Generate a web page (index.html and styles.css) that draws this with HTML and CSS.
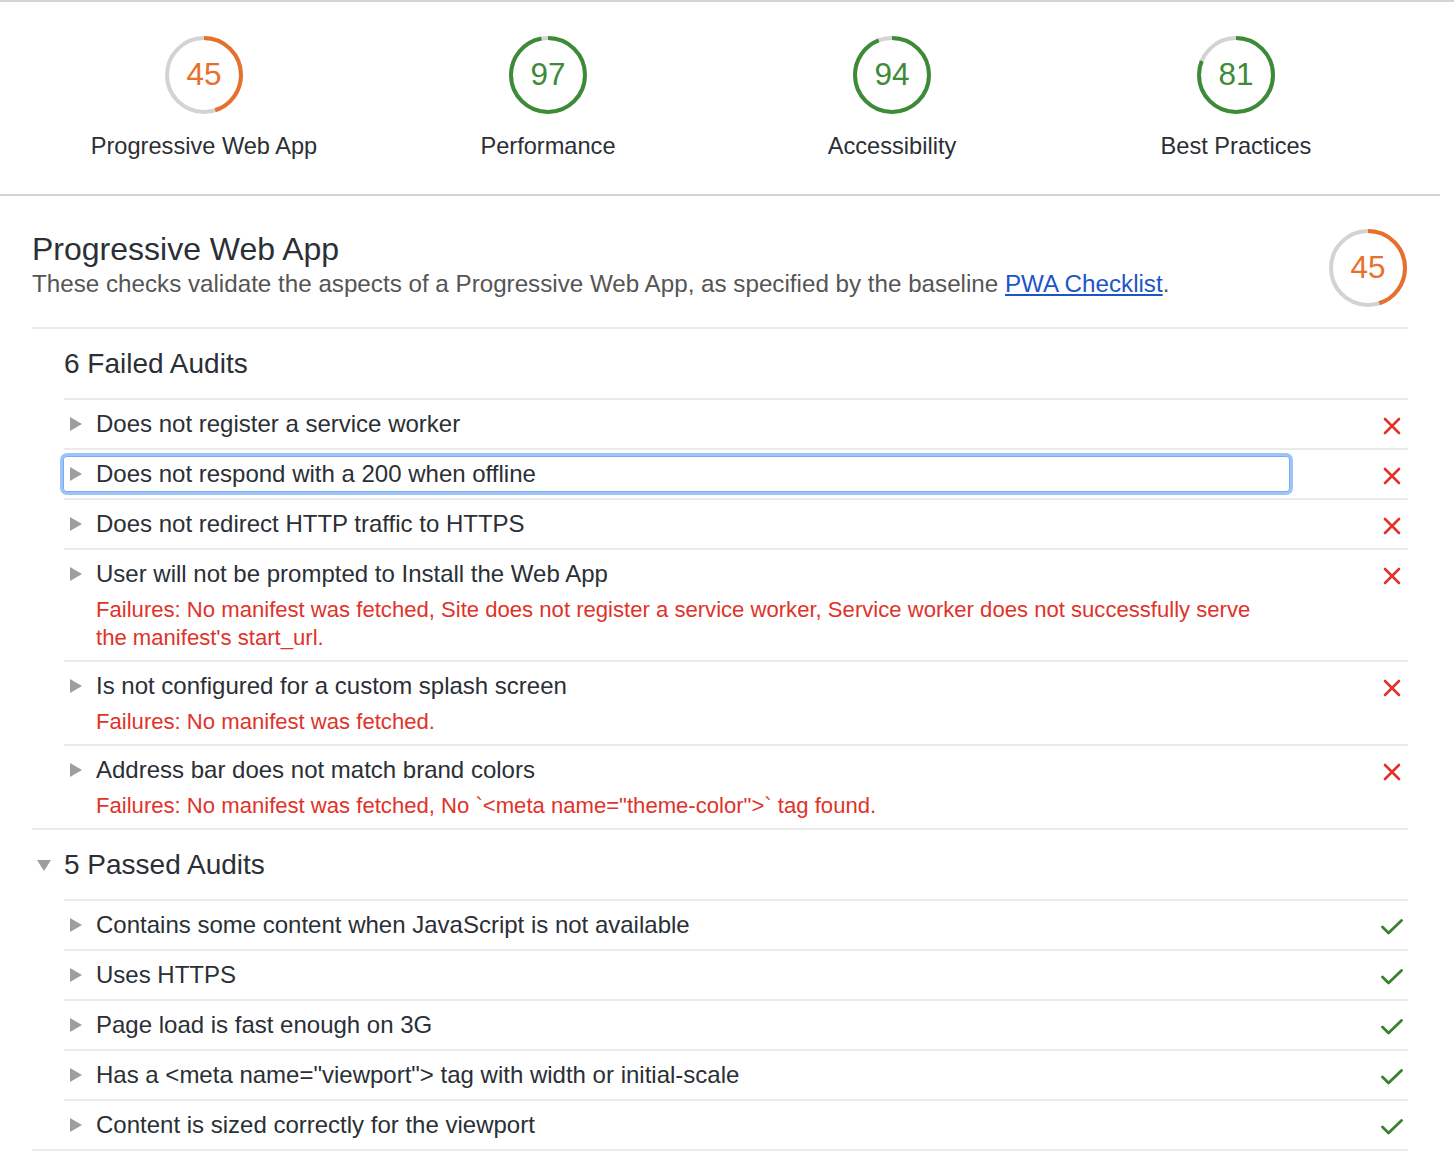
FILE: index.html
```html
<!DOCTYPE html>
<html lang="en">
<head>
<meta charset="utf-8">
<title>Lighthouse Report</title>
<link rel="stylesheet" href="styles.css">
</head>
<body>
<div class="page">
  <header class="scores">
    <div class="score-item">
      <div class="gauge orange">
        <svg viewBox="0 0 80 80" width="80" height="80"><circle class="track" cx="40" cy="40" r="37"/><circle class="arc" cx="40" cy="40" r="37" stroke-dasharray="104.6 232.5"/></svg>
        <span class="gauge-num">45</span>
      </div>
      <div class="score-label">Progressive Web App</div>
    </div>
    <div class="score-item">
      <div class="gauge green">
        <svg viewBox="0 0 80 80" width="80" height="80"><circle class="track" cx="40" cy="40" r="37"/><circle class="arc" cx="40" cy="40" r="37" stroke-dasharray="225.5 232.5"/></svg>
        <span class="gauge-num">97</span>
      </div>
      <div class="score-label">Performance</div>
    </div>
    <div class="score-item">
      <div class="gauge green">
        <svg viewBox="0 0 80 80" width="80" height="80"><circle class="track" cx="40" cy="40" r="37"/><circle class="arc" cx="40" cy="40" r="37" stroke-dasharray="218.5 232.5"/></svg>
        <span class="gauge-num">94</span>
      </div>
      <div class="score-label">Accessibility</div>
    </div>
    <div class="score-item">
      <div class="gauge green">
        <svg viewBox="0 0 80 80" width="80" height="80"><circle class="track" cx="40" cy="40" r="37"/><circle class="arc" cx="40" cy="40" r="37" stroke-dasharray="188.3 232.5"/></svg>
        <span class="gauge-num">81</span>
      </div>
      <div class="score-label">Best Practices</div>
    </div>
  </header>

  <section class="category">
    <div class="cat-header">
      <div class="cat-text">
        <h1 class="cat-title">Progressive Web App</h1>
        <p class="cat-desc">These checks validate the aspects of a Progressive Web App, as specified by the baseline <a href="#" class="link">PWA Checklist</a>.</p>
      </div>
      <div class="gauge orange">
        <svg viewBox="0 0 80 80" width="80" height="80"><circle class="track" cx="40" cy="40" r="37"/><circle class="arc" cx="40" cy="40" r="37" stroke-dasharray="104.6 232.5"/></svg>
        <span class="gauge-num">45</span>
      </div>
    </div>

    <div class="group">
      <div class="group-header"><span class="group-toggle"></span><span>6 Failed Audits</span></div>

      <div class="audit">
        <div class="audit-main">
          <div class="summary"><svg class="tri" viewBox="0 0 12 14" width="12" height="14"><polygon points="0,0 12,7 0,14"/></svg><span>Does not register a service worker</span></div>
        </div>
        <div class="audit-score"><svg class="x" viewBox="0 0 18 18" width="18" height="18"><path d="M2 2 L16 16 M16 2 L2 16"/></svg></div>
      </div>

      <div class="audit">
        <div class="audit-main">
          <div class="summary focused"><svg class="tri" viewBox="0 0 12 14" width="12" height="14"><polygon points="0,0 12,7 0,14"/></svg><span>Does not respond with a 200 when offline</span></div>
        </div>
        <div class="audit-score"><svg class="x" viewBox="0 0 18 18" width="18" height="18"><path d="M2 2 L16 16 M16 2 L2 16"/></svg></div>
      </div>

      <div class="audit">
        <div class="audit-main">
          <div class="summary"><svg class="tri" viewBox="0 0 12 14" width="12" height="14"><polygon points="0,0 12,7 0,14"/></svg><span>Does not redirect HTTP traffic to HTTPS</span></div>
        </div>
        <div class="audit-score"><svg class="x" viewBox="0 0 18 18" width="18" height="18"><path d="M2 2 L16 16 M16 2 L2 16"/></svg></div>
      </div>

      <div class="audit">
        <div class="audit-main">
          <div class="summary"><svg class="tri" viewBox="0 0 12 14" width="12" height="14"><polygon points="0,0 12,7 0,14"/></svg><span>User will not be prompted to Install the Web App</span></div>
          <div class="failure">Failures: No manifest was fetched, Site does not register a service worker, Service worker does not successfully serve the manifest's start_url.</div>
        </div>
        <div class="audit-score"><svg class="x" viewBox="0 0 18 18" width="18" height="18"><path d="M2 2 L16 16 M16 2 L2 16"/></svg></div>
      </div>

      <div class="audit">
        <div class="audit-main">
          <div class="summary"><svg class="tri" viewBox="0 0 12 14" width="12" height="14"><polygon points="0,0 12,7 0,14"/></svg><span>Is not configured for a custom splash screen</span></div>
          <div class="failure">Failures: No manifest was fetched.</div>
        </div>
        <div class="audit-score"><svg class="x" viewBox="0 0 18 18" width="18" height="18"><path d="M2 2 L16 16 M16 2 L2 16"/></svg></div>
      </div>

      <div class="audit">
        <div class="audit-main">
          <div class="summary"><svg class="tri" viewBox="0 0 12 14" width="12" height="14"><polygon points="0,0 12,7 0,14"/></svg><span>Address bar does not match brand colors</span></div>
          <div class="failure">Failures: No manifest was fetched, No `&lt;meta name="theme-color"&gt;` tag found.</div>
        </div>
        <div class="audit-score"><svg class="x" viewBox="0 0 18 18" width="18" height="18"><path d="M2 2 L16 16 M16 2 L2 16"/></svg></div>
      </div>
    </div>

    <div class="group">
      <div class="group-header"><span class="group-toggle"><svg class="tri" viewBox="0 0 14 11" width="14" height="11"><polygon points="0,0 14,0 7,11"/></svg></span><span>5 Passed Audits</span></div>

      <div class="audit">
        <div class="audit-main">
          <div class="summary"><svg class="tri" viewBox="0 0 12 14" width="12" height="14"><polygon points="0,0 12,7 0,14"/></svg><span>Contains some content when JavaScript is not available</span></div>
        </div>
        <div class="audit-score"><svg class="check" viewBox="0 0 22 16" width="22" height="16"><path d="M1.5 8 L7.5 14 L20.5 1.5"/></svg></div>
      </div>

      <div class="audit">
        <div class="audit-main">
          <div class="summary"><svg class="tri" viewBox="0 0 12 14" width="12" height="14"><polygon points="0,0 12,7 0,14"/></svg><span>Uses HTTPS</span></div>
        </div>
        <div class="audit-score"><svg class="check" viewBox="0 0 22 16" width="22" height="16"><path d="M1.5 8 L7.5 14 L20.5 1.5"/></svg></div>
      </div>

      <div class="audit">
        <div class="audit-main">
          <div class="summary"><svg class="tri" viewBox="0 0 12 14" width="12" height="14"><polygon points="0,0 12,7 0,14"/></svg><span>Page load is fast enough on 3G</span></div>
        </div>
        <div class="audit-score"><svg class="check" viewBox="0 0 22 16" width="22" height="16"><path d="M1.5 8 L7.5 14 L20.5 1.5"/></svg></div>
      </div>

      <div class="audit">
        <div class="audit-main">
          <div class="summary"><svg class="tri" viewBox="0 0 12 14" width="12" height="14"><polygon points="0,0 12,7 0,14"/></svg><span>Has a &lt;meta name="viewport"&gt; tag with width or initial-scale</span></div>
        </div>
        <div class="audit-score"><svg class="check" viewBox="0 0 22 16" width="22" height="16"><path d="M1.5 8 L7.5 14 L20.5 1.5"/></svg></div>
      </div>

      <div class="audit">
        <div class="audit-main">
          <div class="summary"><svg class="tri" viewBox="0 0 12 14" width="12" height="14"><polygon points="0,0 12,7 0,14"/></svg><span>Content is sized correctly for the viewport</span></div>
        </div>
        <div class="audit-score"><svg class="check" viewBox="0 0 22 16" width="22" height="16"><path d="M1.5 8 L7.5 14 L20.5 1.5"/></svg></div>
      </div>
    </div>
  </section>
</div>
</body>
</html>
```

FILE: styles.css
```css
* { box-sizing: border-box; }

html, body {
  margin: 0;
  padding: 0;
  background: #fff;
}

body {
  border-top: 2px solid #d4d4d4;
  font-family: "Liberation Sans", Arial, Helvetica, sans-serif;
  color: #2b2f36;
}

.page {
  width: 1440px;
}

/* Top score summary */
.scores {
  display: grid;
  grid-template-columns: repeat(4, 344px);
  padding: 33px 32px 33px;
  border-bottom: 2px solid #d4d4d4;
}

.score-item {
  display: flex;
  flex-direction: column;
  align-items: center;
}

.score-label {
  margin-top: 16px;
  font-size: 23.6px;
  line-height: 30px;
  color: #2b2f36;
}

.gauge {
  display: grid;
  width: 80px;
  height: 80px;
  place-items: center;
}

.gauge svg,
.gauge .gauge-num {
  grid-area: 1 / 1;
}

.gauge svg {
  transform: rotate(-90deg);
}

.gauge .track {
  fill: none;
  stroke: #d3d3d3;
  stroke-width: 4;
}

.gauge .arc {
  fill: none;
  stroke-width: 4;
}

.gauge.orange .arc { stroke: #e8702d; }
.gauge.green .arc { stroke: #3d8b37; }

.gauge-num {
  font-size: 31.5px;
  line-height: 1;
}

.gauge.orange .gauge-num { color: #e8702d; }
.gauge.green .gauge-num { color: #3d8b37; }

/* Category */
.category {
  padding: 0 32px;
}

.cat-header {
  display: flex;
  justify-content: space-between;
  align-items: flex-start;
  padding: 32px 0 19px;
  border-bottom: 2px solid #ebebeb;
}

.cat-text {
  margin-top: 3px;
}

.cat-title {
  margin: 0;
  font-weight: normal;
  font-size: 32px;
  line-height: 36px;
  color: #2b2f36;
}

.cat-desc {
  margin: 3px 0 0;
  font-size: 24.2px;
  line-height: 28px;
  color: #555;
}

.link {
  color: #1d55c9;
  text-decoration: underline;
}

/* Groups */
.group {
  border-bottom: 2px solid #ebebeb;
}

.group-header {
  display: flex;
  align-items: center;
  padding: 18px 0 17px;
  font-size: 28px;
  line-height: 34px;
  color: #2b2f36;
}

.group-toggle {
  display: flex;
  width: 32px;
  padding-left: 5px;
  align-items: center;
}

.group-toggle .tri {
  fill: #9e9e9e;
}

.audit {
  display: grid;
  grid-template-columns: 1fr 118px;
  margin-left: 32px;
  padding: 6px 0 6px;
  border-top: 2px solid #ebebeb;
}

.summary {
  display: flex;
  align-items: center;
  padding: 3px 0;
  font-size: 24px;
  line-height: 30px;
  color: #2b2f36;
  border-radius: 4px;
}

.summary .tri {
  fill: #9e9e9e;
  margin: 0 14px 0 6px;
  flex: none;
}

.summary.focused {
  margin-left: -1px;
  padding-left: 1px;
  box-shadow: 0 0 0 3px #9cc4f7, 0 0 0 1px #78adf2 inset;
}

.failure {
  margin: 4px 0 2px 32px;
  padding-right: 20px;
  font-size: 22.1px;
  line-height: 28px;
  color: #e0332a;
}

.audit-score {
  display: flex;
  justify-content: flex-end;
  padding: 3px 7px 0 0;
  height: 36px;
  align-items: center;
}

.audit-score svg {
  display: block;
}

.x {
  fill: none;
  stroke: #e0332a;
  stroke-width: 2.6;
  stroke-linecap: round;
}

.check {
  margin-right: -2px;
  fill: none;
  stroke: #3b8030;
  stroke-width: 2.8;
  stroke-linecap: round;
  stroke-linejoin: round;
}
```
